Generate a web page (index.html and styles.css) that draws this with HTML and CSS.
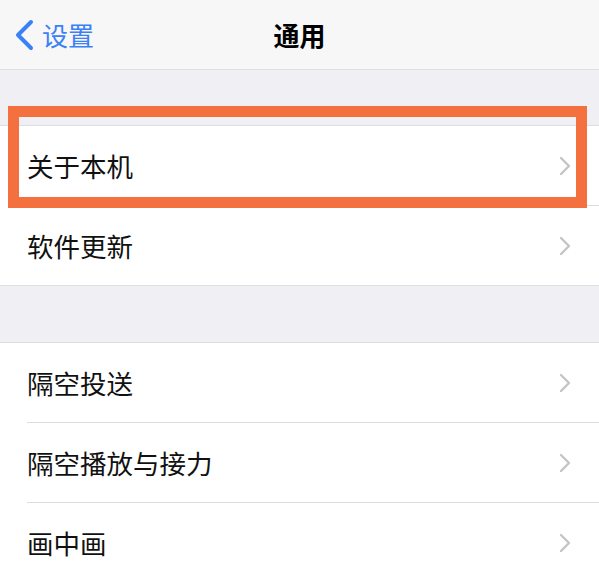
FILE: index.html
```html
<!DOCTYPE html>
<html>
<head>
    <title>通用</title>
    <link rel="stylesheet" href="styles.css">
</head>
<body>
    <header class="nav">
        <a class="back" href="#">
            <svg width="20" height="32" viewBox="0 0 20 32"><polyline points="17,3 4,16 17,29" fill="none" stroke="#3a80f6" stroke-width="4" stroke-linecap="round" stroke-linejoin="round"/></svg>
            <span>设置</span>
        </a>
        <h1 class="title">通用</h1>
        <span></span>
    </header>

    <div class="gap first"></div>
    <ul class="group">
        <li class="row"><span>关于本机</span><svg class="chev" width="12" height="20" viewBox="0 0 12 20"><polyline points="2,2 10,10 2,18" fill="none" stroke="#c4c4c8" stroke-width="2.4" stroke-linecap="round" stroke-linejoin="round"/></svg></li>
        <li class="row"><span>软件更新</span><svg class="chev" width="12" height="20" viewBox="0 0 12 20"><polyline points="2,2 10,10 2,18" fill="none" stroke="#c4c4c8" stroke-width="2.4" stroke-linecap="round" stroke-linejoin="round"/></svg></li>
    </ul>

    <div class="gap"></div>
    <ul class="group">
        <li class="row"><span>隔空投送</span><svg class="chev" width="12" height="20" viewBox="0 0 12 20"><polyline points="2,2 10,10 2,18" fill="none" stroke="#c4c4c8" stroke-width="2.4" stroke-linecap="round" stroke-linejoin="round"/></svg></li>
        <li class="row"><span>隔空播放与接力</span><svg class="chev" width="12" height="20" viewBox="0 0 12 20"><polyline points="2,2 10,10 2,18" fill="none" stroke="#c4c4c8" stroke-width="2.4" stroke-linecap="round" stroke-linejoin="round"/></svg></li>
        <li class="row"><span>画中画</span><svg class="chev" width="12" height="20" viewBox="0 0 12 20"><polyline points="2,2 10,10 2,18" fill="none" stroke="#c4c4c8" stroke-width="2.4" stroke-linecap="round" stroke-linejoin="round"/></svg></li>
    </ul>

    <div class="highlight"></div>
</body>
</html>
```

FILE: styles.css
```css
:root {
    --bg: #efeff4;
    --nav: #f7f7f8;
    --line: #dedee1;
    --text: #111111;
    --blue: #3a80f6;
    --orange: #f4703f;
}

body {
    margin: 0;
    background-color: var(--bg);
    color: var(--text);
    font-family: "Noto Sans CJK SC", "Noto Sans", sans-serif;
    position: relative;
    height: 573px;
    overflow: hidden;
}

.nav {
    height: 69px;
    background-color: var(--nav);
    border-bottom: 1px solid var(--line);
    display: grid;
    grid-template-columns: 1fr auto 1fr;
    align-items: center;
}

.back {
    display: flex;
    align-items: center;
    gap: 8px;
    padding-left: 14px;
    color: var(--blue);
    text-decoration: none;
    font-size: 26px;
}

.back svg {
    display: block;
}

.title {
    margin: 0;
    font-size: 26px;
    font-weight: 700;
    color: #000;
}

.gap {
    height: 56px;
}

.gap.first {
    height: 55px;
}

.group {
    list-style: none;
    margin: 0;
    padding: 0;
    background-color: #fff;
    border-top: 1px solid var(--line);
    border-bottom: 1px solid var(--line);
}

.row {
    height: 79px;
    margin-left: 27px;
    padding-right: 28px;
    display: flex;
    align-items: center;
    justify-content: space-between;
    font-size: 26.5px;
    border-bottom: 1px solid var(--line);
}

.row:last-child {
    border-bottom: none;
}

.chev {
    display: block;
}

.highlight {
    position: absolute;
    left: 8px;
    top: 106px;
    width: 557px;
    height: 80px;
    border: 11px solid var(--orange);
}
```
